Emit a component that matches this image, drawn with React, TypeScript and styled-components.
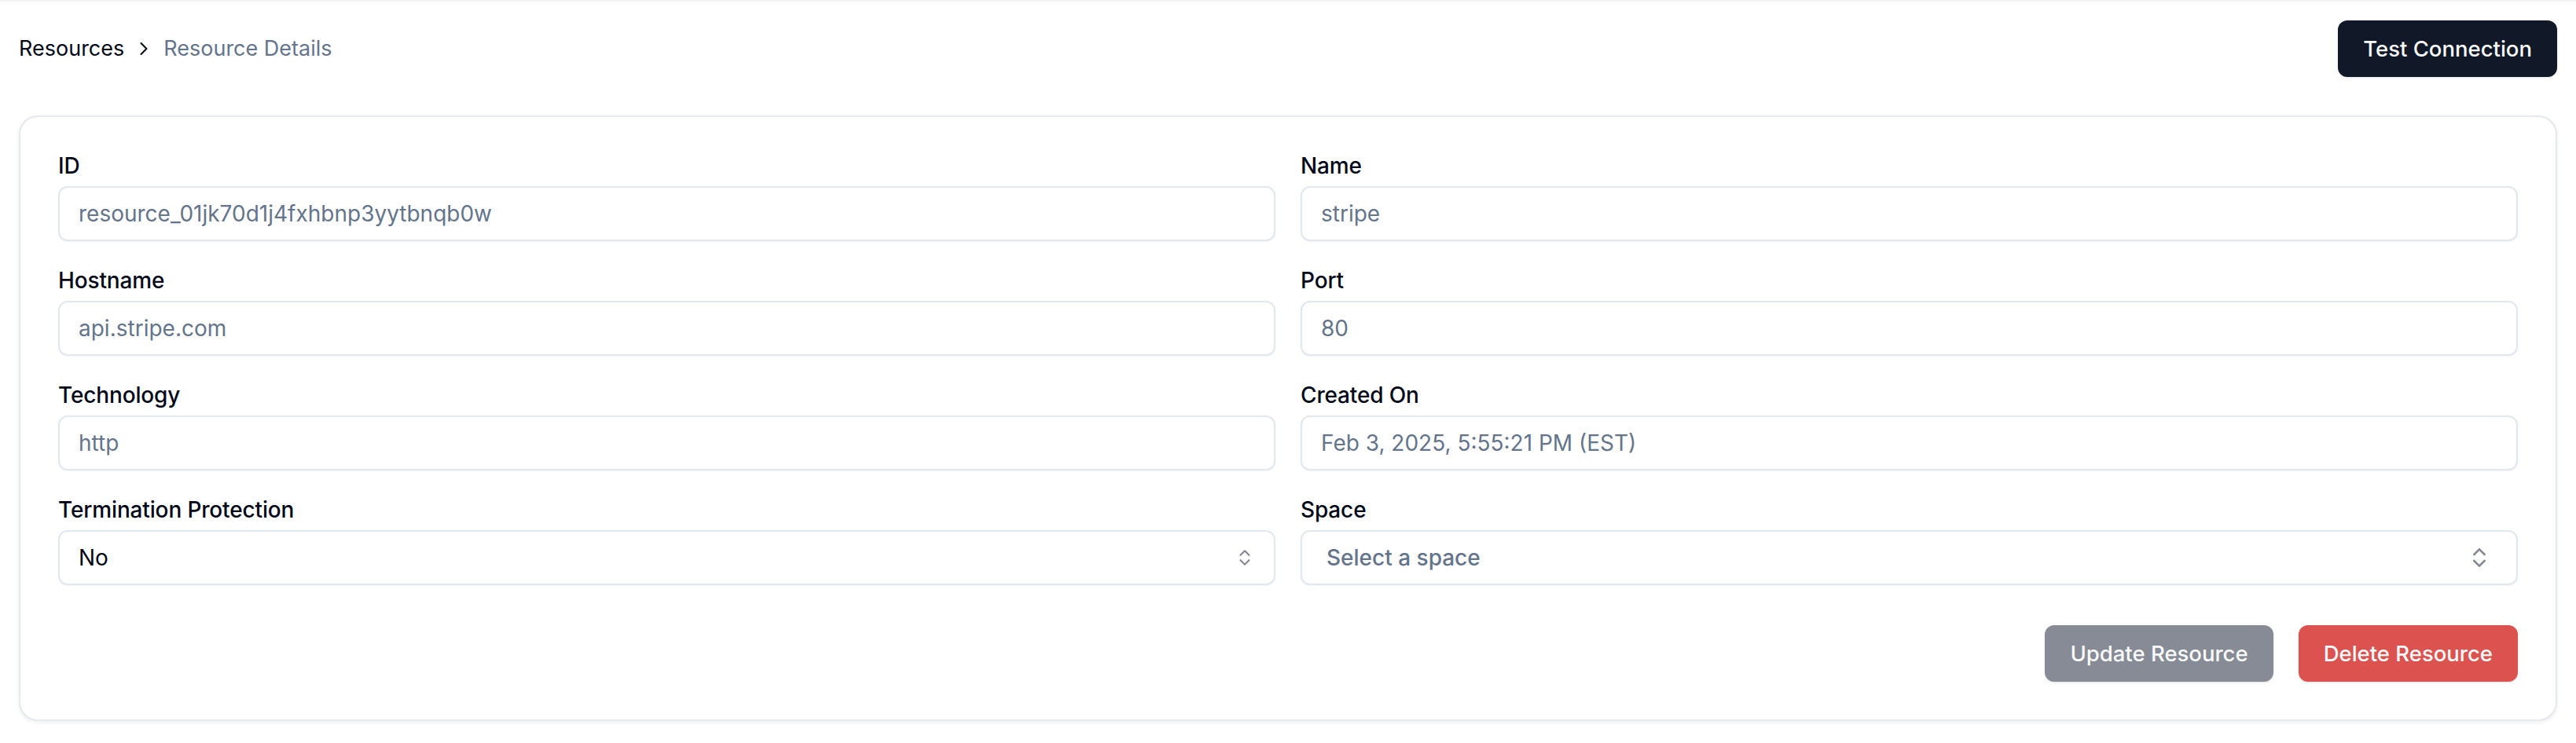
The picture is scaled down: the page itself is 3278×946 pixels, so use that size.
import React from "react";
import styled, { createGlobalStyle } from "styled-components";
import { ChevronRight, ChevronsUpDown } from "lucide-react";

const GlobalStyle = createGlobalStyle`
  html, body {
    margin: 0;
    padding: 0;
    background: #ffffff;
  }
  body {
    font-family: Inter, "Noto Sans", "Liberation Sans", sans-serif;
    color: #020817;
  }
  *, *::before, *::after {
    box-sizing: border-box;
  }
`;

const TopShade = styled.div`
  height: 4px;
  background: linear-gradient(#f1f2f4, #ffffff);
`;

const Page = styled.main`
  padding: 0 24px 28px 24px;
`;

const Header = styled.header`
  display: flex;
  align-items: center;
  justify-content: space-between;
  height: 72px;
  margin-top: 22px;
`;

const Breadcrumb = styled.nav`
  display: flex;
  align-items: center;
  gap: 11px;
  font-size: 27px;
  line-height: 40px;
`;

const Crumb = styled.span<{ $current?: boolean }>`
  color: ${(p) => (p.$current ? "#64748b" : "#020817")};
`;

const CrumbSep = styled.span`
  display: flex;
  align-items: center;
  color: #020817;
`;

const Button = styled.button<{ $variant: "dark" | "muted" | "danger" }>`
  height: 72px;
  padding: 0 32px;
  border: none;
  border-radius: 12px;
  font-family: inherit;
  font-size: 27.5px;
  font-weight: 500;
  line-height: 40px;
  color: #f8fafc;
  cursor: pointer;
  box-shadow: 0 1px 3px rgba(15, 23, 42, 0.12);
  background: ${(p) =>
    p.$variant === "dark" ? "#111827" : p.$variant === "muted" ? "#878b95" : "#dc524f"};
`;

const Card = styled.section`
  margin-top: 49px;
  border: 2px solid #e5e8ed;
  border-radius: 24px;
  padding: 48px;
  background: #ffffff;
  box-shadow: 0 2px 5px rgba(15, 23, 42, 0.07);
`;

const FieldGrid = styled.div`
  display: grid;
  grid-template-columns: 1fr 1fr;
  column-gap: 32px;
  row-gap: 36px;
`;

const Field = styled.div`
  display: flex;
  flex-direction: column;
  gap: 12px;
`;

const Label = styled.label`
  font-size: 28px;
  line-height: 28px;
  font-weight: 500;
  letter-spacing: -0.15px;
  color: #020817;
`;

const TextInput = styled.input`
  height: 70px;
  width: 100%;
  padding: 0 24px;
  border: 2px solid #e2e8f0;
  border-radius: 12px;
  background: #ffffff;
  font-family: inherit;
  font-size: 28px;
  color: #64748b;
  box-shadow: 0 1px 2px rgba(15, 23, 42, 0.05);
  outline: none;
`;

const SelectTrigger = styled.button<{ $pad: number; $placeholder?: boolean }>`
  display: flex;
  align-items: center;
  justify-content: space-between;
  height: 70px;
  width: 100%;
  padding: 0 ${(p) => p.$pad}px;
  border: 2px solid #e2e8f0;
  border-radius: 12px;
  background: #ffffff;
  font-family: inherit;
  font-size: 28px;
  font-weight: ${(p) => (p.$placeholder ? 500 : 400)};
  color: ${(p) => (p.$placeholder ? "#64748b" : "#020817")};
  box-shadow: 0 1px 2px rgba(15, 23, 42, 0.05);
  text-align: left;
`;

const SelectIcon = styled.span`
  display: flex;
  align-items: center;
  color: #0f172a;
  opacity: 0.5;
`;

const Actions = styled.div`
  display: flex;
  justify-content: flex-end;
  gap: 32px;
  margin-top: 51px;
`;

type InputField = { label: string; value: string };

const rows: InputField[][] = [
  [
    { label: "ID", value: "resource_01jk70d1j4fxhbnp3yytbnqb0w" },
    { label: "Name", value: "stripe" },
  ],
  [
    { label: "Hostname", value: "api.stripe.com" },
    { label: "Port", value: "80" },
  ],
  [
    { label: "Technology", value: "http" },
    { label: "Created On", value: "Feb 3, 2025, 5:55:21 PM (EST)" },
  ],
];

export default function App() {
  return (
    <>
      <GlobalStyle />
      <TopShade />
      <Page>
        <Header>
          <Breadcrumb>
            <Crumb>Resources</Crumb>
            <CrumbSep>
              <ChevronRight size={28} strokeWidth={1.8} />
            </CrumbSep>
            <Crumb $current>Resource Details</Crumb>
          </Breadcrumb>
          <Button $variant="dark" type="button">
            Test Connection
          </Button>
        </Header>

        <Card>
          <FieldGrid>
            {rows.flat().map((f) => (
              <Field key={f.label}>
                <Label>{f.label}</Label>
                <TextInput readOnly value={f.value} />
              </Field>
            ))}
            <Field>
              <Label>Termination Protection</Label>
              <SelectTrigger type="button" $pad={24}>
                <span>No</span>
                <SelectIcon>
                  <ChevronsUpDown size={26} strokeWidth={2} />
                </SelectIcon>
              </SelectTrigger>
            </Field>
            <Field>
              <Label>Space</Label>
              <SelectTrigger type="button" $pad={31} $placeholder>
                <span>Select a space</span>
                <SelectIcon>
                  <ChevronsUpDown size={32} strokeWidth={2} />
                </SelectIcon>
              </SelectTrigger>
            </Field>
          </FieldGrid>

          <Actions>
            <Button $variant="muted" type="button">
              Update Resource
            </Button>
            <Button $variant="danger" type="button">
              Delete Resource
            </Button>
          </Actions>
        </Card>
      </Page>
    </>
  );
}
